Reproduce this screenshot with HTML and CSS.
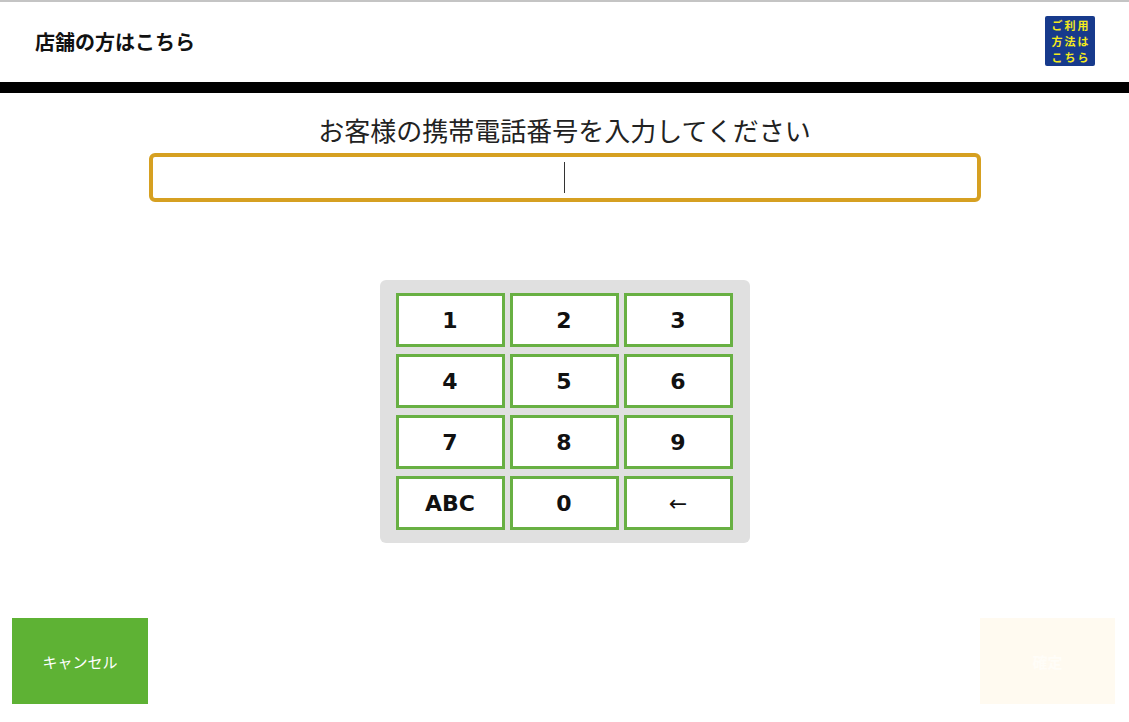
FILE: index.html
```html
<!DOCTYPE html>
<html lang="ja">
<head>
<meta charset="utf-8">
<title>携帯電話番号入力</title>
<link rel="stylesheet" href="styles.css">
</head>
<body>
<div class="screen">
  <header class="header">
    <div class="title">店舗の方はこちら</div>
    <div class="help-logo" aria-label="ご利用方法はこちら">
      <span>ご利用</span><span>方法は</span><span>こちら</span>
    </div>
  </header>
  <main class="main">
    <h1 class="prompt">お客様の携帯電話番号を入力してください</h1>
    <div class="input-box"><span class="caret"></span></div>
    <div class="keypad">
      <button class="key">1</button>
      <button class="key">2</button>
      <button class="key">3</button>
      <button class="key">4</button>
      <button class="key">5</button>
      <button class="key">6</button>
      <button class="key">7</button>
      <button class="key">8</button>
      <button class="key">9</button>
      <button class="key">ABC</button>
      <button class="key">0</button>
      <button class="key key-back">←</button>
    </div>
  </main>
  <footer class="footer">
    <button class="btn btn-cancel">キャンセル</button>
    <button class="btn btn-next">確定</button>
  </footer>
</div>
</body>
</html>
```

FILE: styles.css
```css
* { box-sizing: border-box; }
html, body { margin: 0; padding: 0; background: #fff; }
body {
  font-family: "Noto Sans CJK JP", "Noto Sans", sans-serif;
  color: #111;
}
.screen {
  width: 1129px;
  height: 722px;
  display: flex;
  flex-direction: column;
  border-top: 2px solid #c4c4c4;
  overflow: hidden;
}
.header {
  height: 91px;
  border-bottom: 11px solid #000;
  display: flex;
  align-items: flex-start;
  justify-content: space-between;
  padding: 0 34px 0 35px;
}
.title {
  margin-top: 25px;
  font-size: 20px;
  font-weight: 700;
  line-height: 30px;
  color: #111;
}
.help-logo {
  margin-top: 14px;
  width: 50px;
  height: 50px;
  background: #173a8c;
  border-radius: 2px;
  display: flex;
  flex-direction: column;
  align-items: center;
  justify-content: center;
  color: #f4ea1c;
  font-weight: 700;
  font-size: 11px;
  line-height: 16px;
  letter-spacing: 2px;
  padding-left: 2px;
}
.main {
  flex: 1;
  display: flex;
  flex-direction: column;
  align-items: center;
}
.prompt {
  margin: 19px 0 0;
  font-size: 26px;
  font-weight: 400;
  line-height: 36px;
  color: #222;
}
.input-box {
  margin-top: 5px;
  width: 832px;
  height: 49px;
  border: 4px solid #d6a021;
  border-radius: 6px;
  display: flex;
  align-items: center;
  justify-content: center;
}
.caret {
  width: 1px;
  height: 31px;
  background: #333;
}
.keypad {
  margin-top: 78px;
  width: 370px;
  background: #e0e0e0;
  border-radius: 6px;
  padding: 13px 17px 13px 16px;
  display: grid;
  grid-template-columns: repeat(3, 109px);
  grid-auto-rows: 54px;
  column-gap: 5px;
  row-gap: 7px;
}
.key {
  margin: 0;
  padding: 0;
  background: #fff;
  border: 3px solid #68b043;
  font-family: "DejaVu Sans", Verdana, sans-serif;
  font-weight: 700;
  font-size: 22px;
  color: #111;
  display: flex;
  align-items: center;
  justify-content: center;
}
.key-back {
  font-family: "DejaVu Sans", sans-serif;
  font-weight: 400;
  font-size: 22px;
}
.footer {
  display: flex;
  justify-content: space-between;
  padding: 0 14px 18px 12px;
}
.btn {
  width: 136px;
  height: 86px;
  border: none;
  margin: 0;
  font-family: "Noto Sans CJK JP", sans-serif;
  font-size: 15px;
}
.btn-cancel {
  background: #5eb234;
  color: #fff;
}
.btn-next {
  width: 135px;
  background: #fffaf0;
  color: #fffdf8;
  font-weight: 700;
}
```
